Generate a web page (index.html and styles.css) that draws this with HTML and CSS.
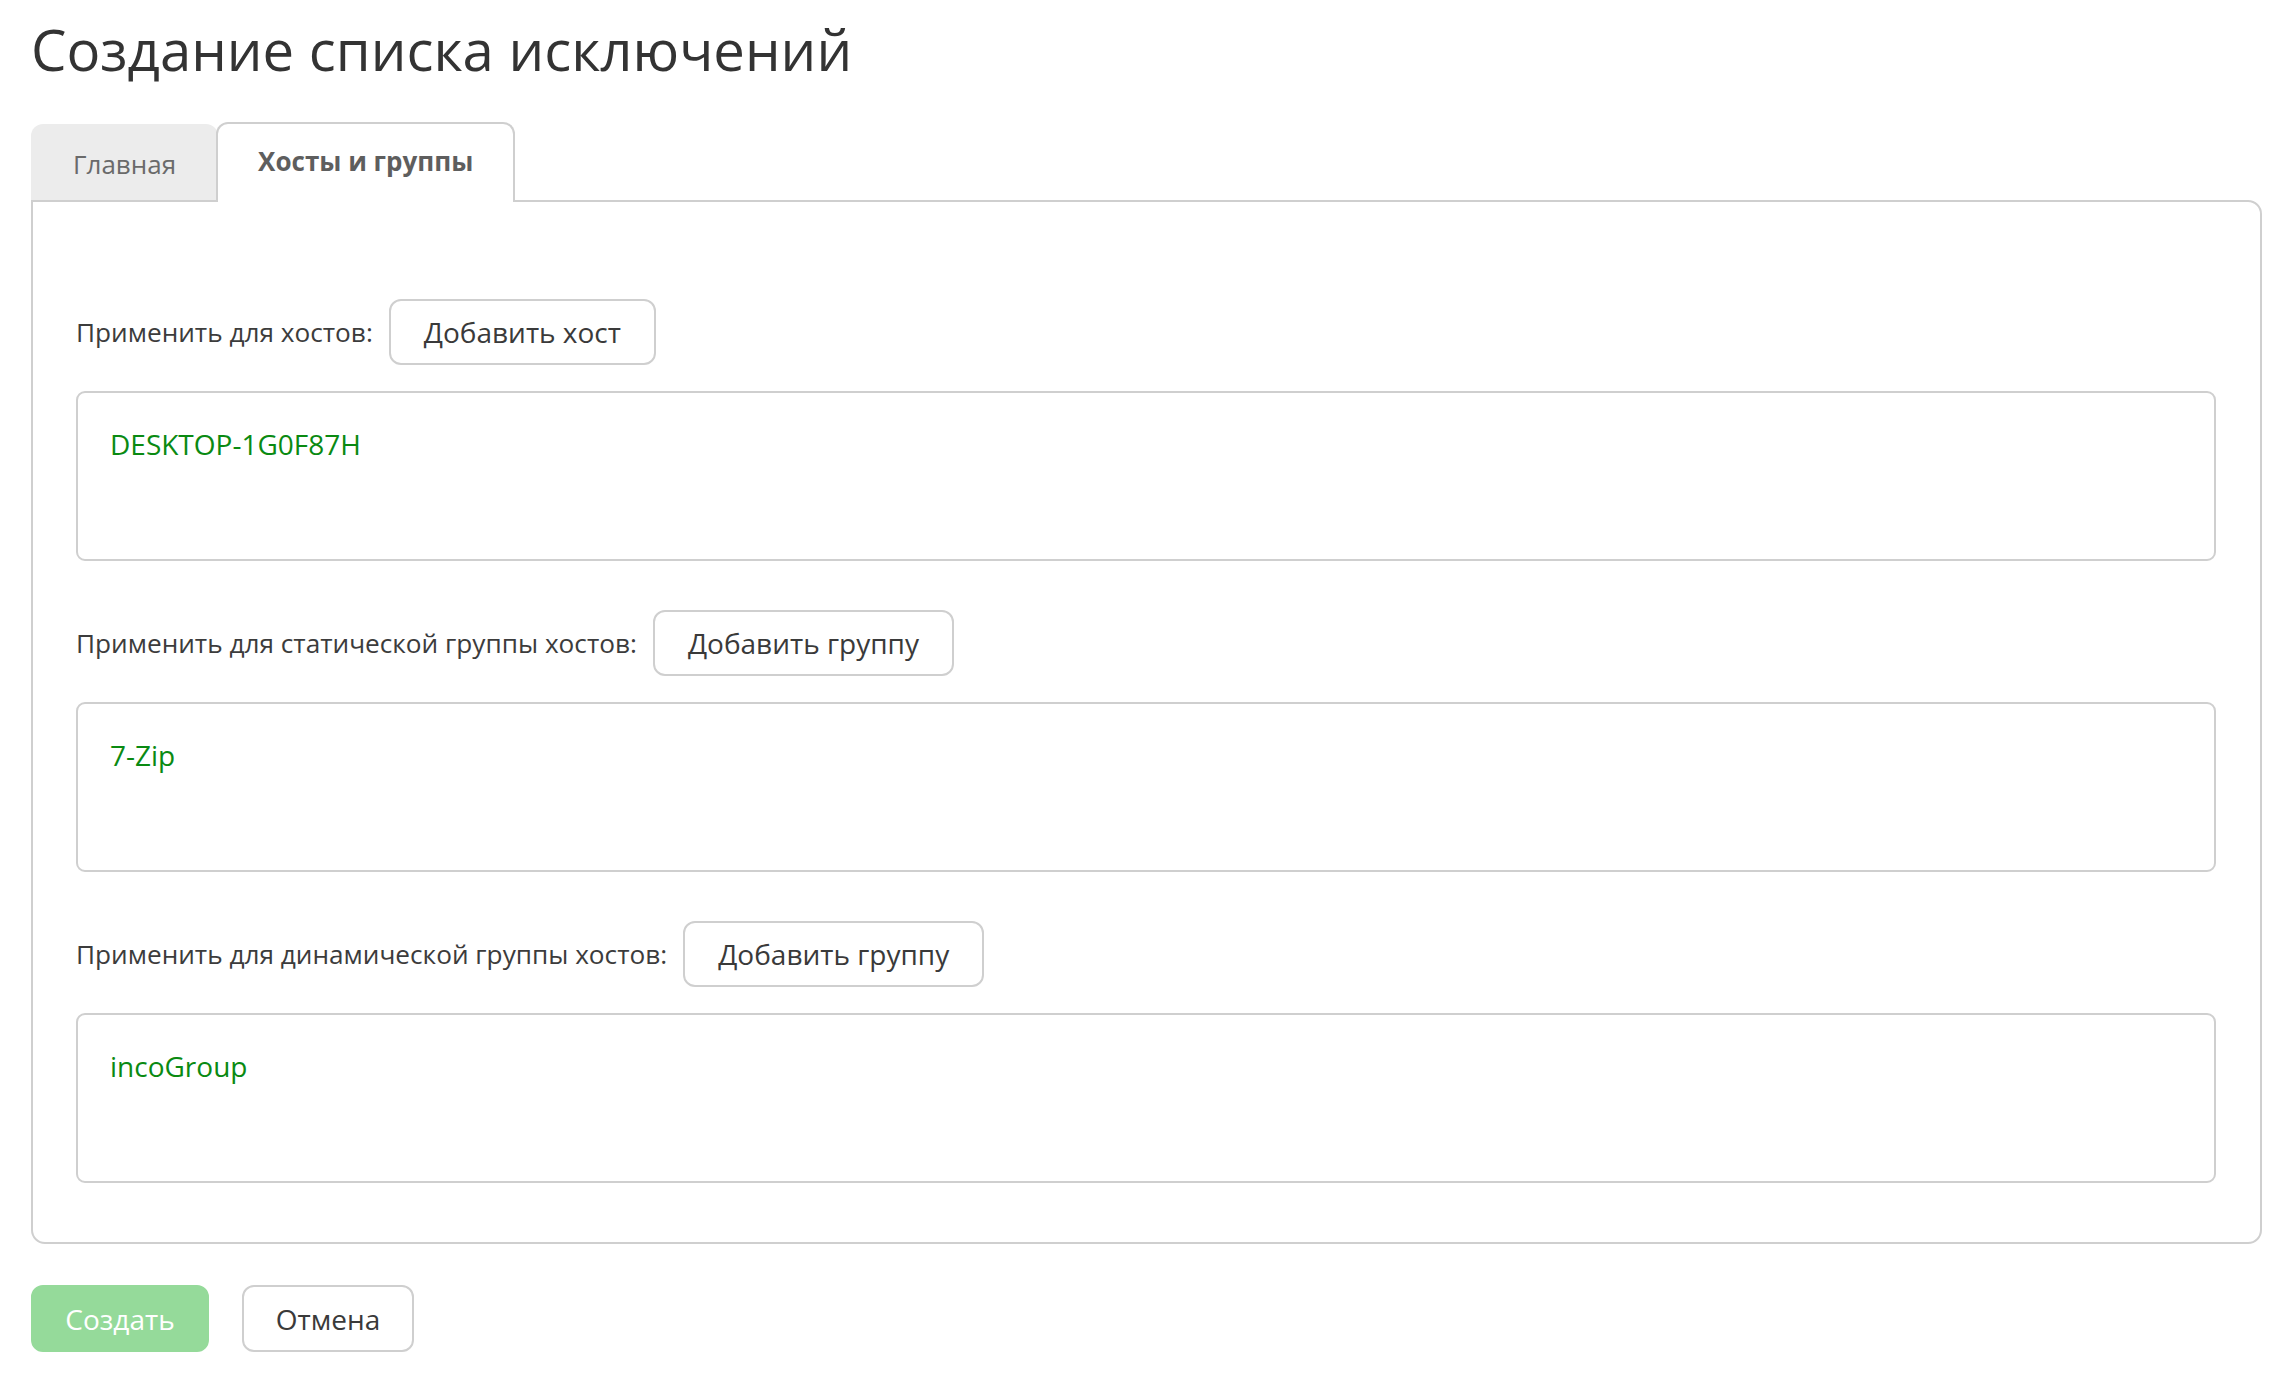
FILE: index.html
```html
<!DOCTYPE html>
<html lang="ru">
<head>
<meta charset="utf-8">
<title>Создание списка исключений</title>
<link rel="stylesheet" href="styles.css">
</head>
<body>
<div class="page">
  <h1 class="title">Создание списка исключений</h1>
  <div class="tabs">
    <div class="tab">Главная</div>
    <div class="tab tab-active">Хосты и группы</div>
  </div>
  <div class="panel">
    <section class="section">
      <div class="row">
        <span class="label">Применить для хостов:</span>
        <button class="btn">Добавить хост</button>
      </div>
      <div class="box"><span class="item">DESKTOP-1G0F87H</span></div>
    </section>
    <section class="section">
      <div class="row">
        <span class="label">Применить для статической группы хостов:</span>
        <button class="btn">Добавить группу</button>
      </div>
      <div class="box"><span class="item">7-Zip</span></div>
    </section>
    <section class="section">
      <div class="row">
        <span class="label">Применить для динамической группы хостов:</span>
        <button class="btn">Добавить группу</button>
      </div>
      <div class="box"><span class="item">incoGroup</span></div>
    </section>
  </div>
  <div class="actions">
    <button class="btn btn-primary">Создать</button>
    <button class="btn btn-cancel">Отмена</button>
  </div>
</div>
</body>
</html>
```

FILE: styles.css
```css
* { box-sizing: border-box; }
html, body { margin: 0; padding: 0; background: #fff; }
body {
  font-family: "Open Sans", "Noto Sans", sans-serif;
  color: #333;
}
.page {
  padding: 0 28px 0 31px;
}
.title {
  margin: 14px 0 38px 0;
  font-size: 56.3px;
  line-height: 70px;
  font-weight: 400;
  color: #333;
}
.tabs {
  display: flex;
  align-items: flex-end;
  height: 78px;
}
.tab {
  height: 76px;
  padding: 0 42px;
  display: flex;
  align-items: center;
  padding-top: 4px;
  background: #ececec;
  color: #6a6a6a;
  font-size: 26px;
  border-top-left-radius: 12px;
  border-top-right-radius: 12px;
}
.tab-active {
  position: relative;
  z-index: 1;
  height: 80px;
  margin-bottom: -2px;
  margin-left: -2px;
  padding: 0 40px;
  padding-bottom: 4px;
  background: #fff;
  border: 2px solid #cfcfcf;
  border-bottom: none;
  color: #5e5e5e;
  font-weight: 700;
}
.panel {
  border: 2px solid #cfcfcf;
  border-radius: 0 14px 14px 14px;
  padding: 97px 44px 59px 43px;
  display: flex;
  flex-direction: column;
  gap: 49px;
}
.section {
  display: flex;
  flex-direction: column;
  gap: 26px;
}
.row {
  display: flex;
  align-items: center;
  gap: 16px;
}
.label {
  font-size: 26.2px;
  color: #3c3c3c;
}
.btn {
  font-family: "Open Sans", "Noto Sans", sans-serif;
  font-size: 28px;
  color: #3a3a3a;
  background: #fff;
  border: 2px solid #cfcfcf;
  border-radius: 12px;
  height: 66px;
  padding: 0 33px;
  cursor: pointer;
}
.box {
  height: 170px;
  border: 2px solid #cfcfcf;
  border-radius: 9px;
  padding: 29px 32px;
}
.item {
  font-size: 28px;
  line-height: 44px;
  color: #0a8a12;
}
.actions {
  display: flex;
  gap: 33px;
  margin-top: 41px;
}
.btn-primary {
  height: 67px;
  width: 178px;
  padding: 0;
  background: #95da9a;
  border-color: #95da9a;
  color: #fff;
}
.btn-cancel {
  height: 67px;
  width: 172px;
  padding: 0;
}
```
